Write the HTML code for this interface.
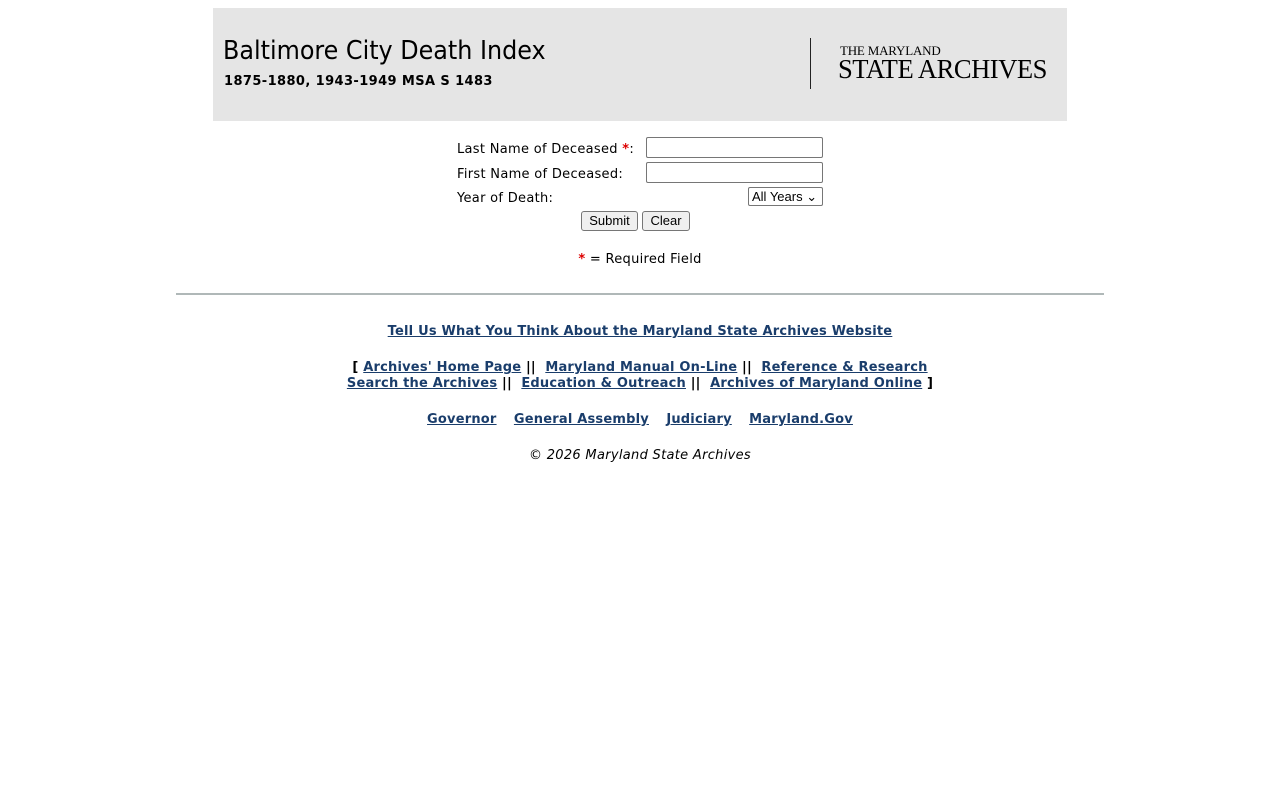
<!DOCTYPE html>
<html><head><meta charset="utf-8"><style>
body{margin:0;background:#fff;font-family:"DejaVu Sans",Verdana,sans-serif;font-size:13px;color:#000;letter-spacing:0.3px;}
.abs{position:absolute;white-space:nowrap;}
.hdr{position:absolute;left:213px;top:8px;width:854px;height:113px;background:#e5e5e5;letter-spacing:0;}
a{color:#1a3d6b;font-weight:bold;text-decoration:underline;}
.c{position:absolute;left:0;width:1280px;text-align:center;white-space:nowrap;}
.b{letter-spacing:0.2px;}
input.t{position:absolute;width:177px;border:1px solid #767676;border-radius:2px;box-sizing:border-box;height:21px;background:#fff;}
.btn{position:absolute;height:20px;border:1px solid #767676;border-radius:3px;background:#efefef;font-family:"Liberation Sans",Arial,sans-serif;font-size:13px;text-align:center;line-height:18px;box-sizing:border-box;letter-spacing:0;}
.red{color:#d00;font-weight:bold;}
</style></head><body>
<div class="hdr">
 <div class="abs" style="left:10px;top:28px;font-size:26px;font-family:'DejaVu Sans Condensed','DejaVu Sans',sans-serif;transform:scaleX(1.02);transform-origin:left;">Baltimore City Death Index</div>
 <div class="abs" style="left:11px;top:66px;font-size:13px;font-weight:bold;letter-spacing:0.4px;">1875-1880, 1943-1949 MSA S 1483</div>
 <div style="position:absolute;left:597px;top:30px;width:1px;height:51px;background:#222;"></div>
 <div class="abs" style="left:627px;top:35px;font-family:'Liberation Serif',serif;font-size:13px;letter-spacing:-0.2px;">THE MARYLAND</div>
 <div class="abs" style="left:625px;top:46px;font-family:'Liberation Serif',serif;font-size:27px;letter-spacing:-0.5px;transform:scaleX(0.985);transform-origin:left;">STATE ARCHIVES</div>
</div>
<div class="abs" style="left:457px;top:142px;">Last Name of Deceased <span class="red">*</span>:</div>
<input class="t" style="left:646px;top:137px;">
<div class="abs" style="left:457px;top:167px;">First Name of Deceased:</div>
<input class="t" style="left:646px;top:162px;">
<div class="abs" style="left:457px;top:191px;">Year of Death:</div>
<div class="btn" style="left:748px;top:187px;width:75px;height:19px;background:#fff;border-radius:2px;text-align:left;padding-left:3px;line-height:17px;">All Years &#8964;</div>
<div class="btn" style="left:581px;top:211px;width:57px;">Submit</div>
<div class="btn" style="left:642px;top:211px;width:48px;">Clear</div>
<div class="c" style="top:252px;"><span class="red">*</span> = Required Field</div>
<div style="position:absolute;left:176px;top:293px;width:928px;height:2px;background:#b0b8b8;"></div>
<div class="c b" style="top:324px;"><a>Tell Us What You Think About the Maryland State Archives Website</a></div>
<div class="c b" style="top:360px;font-weight:bold;">[ <a>Archives' Home Page</a> ||&nbsp; <a>Maryland Manual On-Line</a> ||&nbsp; <a>Reference &amp; Research</a></div>
<div class="c b" style="top:376px;font-weight:bold;"><a>Search the Archives</a> ||&nbsp; <a>Education &amp; Outreach</a> ||&nbsp; <a>Archives of Maryland Online</a> ]</div>
<div class="c b" style="top:412px;"><a>Governor</a>&nbsp;&nbsp;&nbsp; <a>General Assembly</a>&nbsp;&nbsp;&nbsp; <a>Judiciary</a>&nbsp;&nbsp;&nbsp; <a>Maryland.Gov</a></div>
<div class="c" style="top:448px;font-style:italic;">© 2026 Maryland State Archives</div>
</body></html>
